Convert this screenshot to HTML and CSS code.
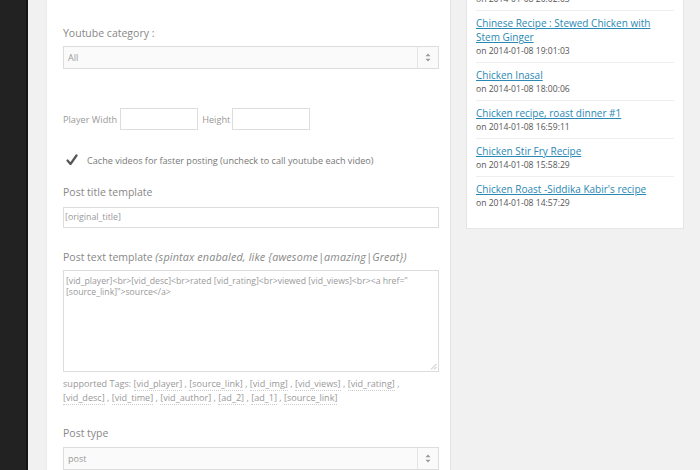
FILE: index.html
```html
<!DOCTYPE html>
<html>
<head>
<meta charset="utf-8">
<link rel="stylesheet" href="styles.css">
</head>
<body>
<div class="app">
  <div class="sidebar"></div>
  <div class="main">
    <div class="panel-left">
      <div class="label lbl-cat">Youtube category :</div>
      <div class="select sel-cat"><span class="sel-val">All</span><span class="sel-arrow"><svg width="6" height="9" viewBox="0 0 6 9"><path d="M3 0.5 L5.5 3.2 H0.5 Z M3 8.5 L5.5 5.8 H0.5 Z" fill="#999"/></svg></span></div>
      <div class="size-row">
        <span class="small-label">Player Width</span>
        <span class="input in-w"></span>
        <span class="small-label">Height</span>
        <span class="input in-h"></span>
      </div>
      <div class="check-row">
        <span class="checkbox"><svg width="14" height="13" viewBox="0 0 14 13"><path d="M2.5 6.5 L5.5 10 L11.5 1.5" fill="none" stroke="#555" stroke-width="2.2" stroke-linecap="round" stroke-linejoin="round"/></svg></span>
        <span class="check-label">Cache videos for faster posting (uncheck to call youtube each video)</span>
      </div>
      <div class="label lbl-title">Post title template</div>
      <div class="input text-in">[original_title]</div>
      <div class="label lbl-text">Post text template <em>(spintax enabaled, like {awesome|amazing|Great})</em></div>
      <div class="textarea">[vid_player]&lt;br&gt;[vid_desc]&lt;br&gt;rated [vid_rating]&lt;br&gt;viewed [vid_views]&lt;br&gt;&lt;a href="<br>[source_link]"&gt;source&lt;/a&gt;<span class="grip"><svg width="7" height="7" viewBox="0 0 7 7"><path d="M6.5 1 L1 6.5 M6.5 4 L4 6.5" stroke="#bbb" stroke-width="1"/></svg></span></div>
      <div class="tags">supported Tags: <span class="tag">[vid_player]</span> , <span class="tag">[source_link]</span> , <span class="tag">[vid_img]</span> , <span class="tag">[vid_views]</span> , <span class="tag">[vid_rating]</span> ,<br><span class="tag">[vid_desc]</span> , <span class="tag">[vid_time]</span> , <span class="tag">[vid_author]</span> , <span class="tag">[ad_2]</span> , <span class="tag">[ad_1]</span> , <span class="tag">[source_link]</span></div>
      <div class="label lbl-type">Post type</div>
      <div class="select sel-type"><span class="sel-val">post</span><span class="sel-arrow"><svg width="6" height="9" viewBox="0 0 6 9"><path d="M3 0.5 L5.5 3.2 H0.5 Z M3 8.5 L5.5 5.8 H0.5 Z" fill="#999"/></svg></span></div>
    </div>
    <div class="panel-right">
      <ul class="posts">
        <li class="first"><span class="meta">on 2014-01-08 20:02:03</span></li>
        <li><a href="#">Chinese Recipe : Stewed Chicken with<br>Stem Ginger</a><span class="meta">on 2014-01-08 19:01:03</span></li>
        <li><a href="#">Chicken Inasal</a><span class="meta">on 2014-01-08 18:00:06</span></li>
        <li><a href="#">Chicken recipe, roast dinner #1</a><span class="meta">on 2014-01-08 16:59:11</span></li>
        <li><a href="#">Chicken Stir Fry Recipe</a><span class="meta">on 2014-01-08 15:58:29</span></li>
        <li class="last"><a href="#">Chicken Roast -Siddika Kabir's recipe</a><span class="meta">on 2014-01-08 14:57:29</span></li>
      </ul>
    </div>
  </div>
</div>
</body>
</html>
```
FILE: styles.css
```css
html, body {
  margin: 0;
  padding: 0;
  height: 100%;
  overflow: hidden;
}
body {
  font-family: "Open Sans", "Liberation Sans", sans-serif;
  background: #f1f1f1;
  color: #777;
}
.app {
  display: flex;
  height: 470px;
}
.sidebar {
  width: 26px;
  background: #222;
  border-right: 2px solid #151515;
  flex: none;
}
.main {
  flex: 1;
  display: flex;
  align-items: flex-start;
  padding-left: 18px;
  background: #f1f1f1;
}
.panel-left {
  width: 387px;
  height: 480px;
  background: #fff;
  border-right: 1px solid #e3e3e3;
  border-left: 1px solid #ececec;
  padding-left: 16px;
  box-sizing: content-box;
}
.label {
  font-size: 10.5px;
  line-height: 14px;
  color: #888;
}
.lbl-cat { margin-top: 26px; }
.lbl-title { margin-top: 17px; }
.lbl-text { margin-top: 22px; }
.lbl-type { margin-top: 21px; }
.label em { font-style: italic; font-size: 10.8px; letter-spacing: 0.15px; }
.select {
  width: 376px;
  height: 23px;
  box-sizing: border-box;
  border: 1px solid #ddd;
  background: #fafafa;
  display: flex;
  align-items: center;
  justify-content: space-between;
  font-size: 9px;
  color: #999;
}
.sel-cat { margin-top: 6px; }
.sel-type { margin-top: 7px; }
.sel-val { padding-left: 4px; }
.sel-arrow {
  width: 20px;
  height: 100%;
  border-left: 1px solid #e5e5e5;
  display: flex;
  align-items: center;
  justify-content: center;
}
.size-row {
  margin-top: 39px;
  display: flex;
  align-items: center;
  height: 22px;
}
.small-label {
  font-size: 9.2px;
  color: #999;
}
.input {
  display: block;
  box-sizing: border-box;
  border: 1px solid #ddd;
  background: #fff;
}
.in-w { width: 78px; height: 22px; margin-left: 3px; margin-right: 4px; }
.in-h { width: 78px; height: 22px; margin-left: 2px; }
.check-row {
  margin-top: 23px;
  display: flex;
  align-items: center;
  height: 15px;
}
.checkbox {
  width: 14px;
  height: 13px;
  margin-left: 2px;
  margin-right: 8px;
  display: flex;
}
.check-label {
  font-size: 9.1px;
  color: #777;
}
.text-in {
  margin-top: 8px;
  width: 376px;
  height: 21px;
  font-size: 8.8px;
  line-height: 19px;
  padding-left: 1px;
  color: #999;
}
.textarea {
  position: relative;
  margin-top: 6px;
  width: 376px;
  height: 102px;
  box-sizing: border-box;
  border: 1px solid #ddd;
  padding: 5px 2px;
  font-size: 8.7px;
  line-height: 11px;
  color: #999;
}
.grip {
  position: absolute;
  right: 1px;
  bottom: 1px;
  display: flex;
}
.tags {
  margin-top: 5px;
  font-size: 9.1px;
  line-height: 14px;
  color: #999;
}
.tag {
  border-bottom: 1px dotted #ccc;
}
.panel-right {
  margin-left: 15px;
  width: 198px;
  background: #fff;
  border: 1px solid #e5e5e5;
  border-top: none;
  padding: 0 9px 14px 9px;
}
.posts {
  list-style: none;
  margin: -8px 0 0 0;
  padding: 0;
}
.posts li {
  padding: 5px 0 4px 0;
  border-bottom: 1px solid #eee;
}
.posts li.first { padding-top: 0; }
.posts li.last { border-bottom: none; }
.posts a {
  display: block;
  font-size: 10px;
  line-height: 14px;
  color: #2a88b4;
  text-decoration: underline;
  white-space: nowrap;
}
.meta {
  display: block;
  font-size: 8.6px;
  line-height: 14px;
  color: #555;
  white-space: nowrap;
}
```
